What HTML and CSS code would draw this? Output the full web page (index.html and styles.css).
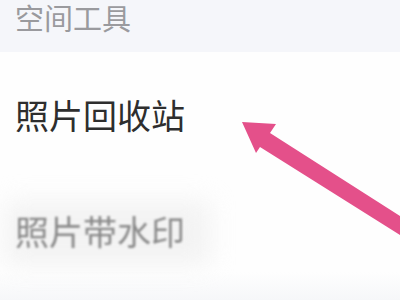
FILE: index.html
```html
<!DOCTYPE html>
<html lang="zh">
<head>
<meta charset="utf-8">
<link rel="stylesheet" href="styles.css">
</head>
<body>
<div class="screen">
  <div class="section-head">空间工具</div>
  <div class="list">
    <div class="row row-main">照片回收站</div>
    <div class="row row-blur"><span class="blur-text">照片带水印</span></div>
  </div>
  <svg class="arrow" width="400" height="300" viewBox="0 0 400 300">
    <polygon points="242,122 276,124 270,133 400,216 400,235 260,147 256,153" fill="#e4508a"/>
  </svg>
</div>
</body>
</html>
```
FILE: styles.css
```css
html, body {
  margin: 0;
  padding: 0;
}
body {
  width: 400px;
  height: 300px;
  overflow: hidden;
  background: #fefefe;
  font-family: "Noto Sans CJK SC", "Noto Sans", sans-serif;
}
.screen {
  position: relative;
  width: 400px;
  height: 300px;
  display: flex;
  flex-direction: column;
}
.section-head {
  height: 52px;
  box-sizing: border-box;
  background: #f5f6fa;
  padding: 0 0 0 15px;
  font-size: 29px;
  line-height: 35px;
  color: #9a9a9e;
}
.list {
  flex: 1;
  display: flex;
  flex-direction: column;
  background: linear-gradient(#fefefe 0, #fefefe 220px, #f6f7f9 248px);
}
.row {
  padding-left: 15px;
  font-size: 34px;
  line-height: 40px;
}
.row-main {
  color: #2e2e2e;
  margin-top: 43px;
}
.row-blur {
  margin-top: 76px;
  position: relative;
  width: 195px;
}
.row-blur::before {
  content: "";
  position: absolute;
  left: 5px;
  right: 0;
  top: -10px;
  bottom: -14px;
  background: #eeeeee;
  filter: blur(12px);
  opacity: 0.7;
}
.blur-text {
  position: relative;
  color: #888888;
  filter: blur(0.8px);
  display: inline-block;
}
.arrow {
  position: absolute;
  left: 0;
  top: 0;
}
```
